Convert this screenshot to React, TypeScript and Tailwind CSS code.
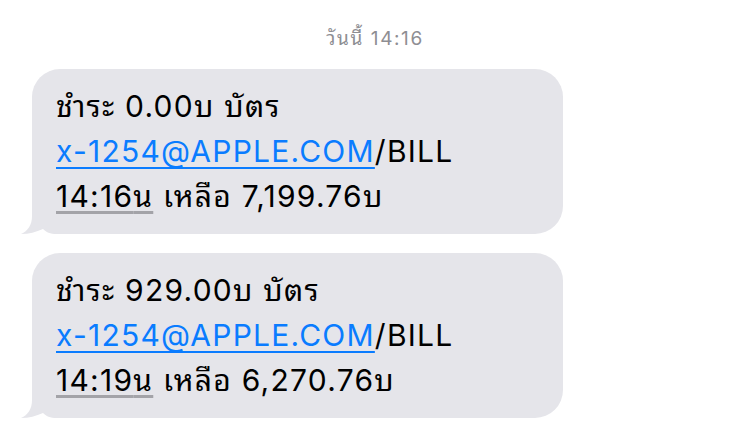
import React from "react";

function Tail() {
  return (
    <svg
      className="absolute bottom-0 left-[-11px]"
      width="50"
      height="30"
      viewBox="0 0 50 30"
    >
      <path
        d="M11 0 L11 12 C11 21 7 27 0 30 C8 30 15 28 22 25 C25 28 29 30 36 30 L50 30 L50 0 Z"
        fill="#e5e5ea"
      />
    </svg>
  );
}

function Bubble({ amount, time, balance }: { amount: string; time: string; balance: string }) {
  return (
    <div className="relative ml-[32px] h-[165px] w-[531px] rounded-[28px] bg-[#e5e5ea]">
      <Tail />
      <div className="relative pl-[24px] pt-[15px] font-['Inter','Noto_Sans_Thai_Looped',sans-serif] text-[30px] leading-[45px] tracking-[1.25px] text-black">
        <div>ชำระ {amount}บ บัตร</div>
        <div>
          <span className="text-[#0a7cff] underline decoration-[1.5px] underline-offset-[5px] [text-decoration-skip-ink:none]">
            x-1254@APPLE.COM
          </span>
          /BILL
        </div>
        <div>
          <span className="underline decoration-[#a3a3a8] decoration-[3px] underline-offset-[4px] [text-decoration-skip-ink:none]">
            {time}น
          </span>{" "}
          เหลือ {balance}บ
        </div>
      </div>
    </div>
  );
}

export default function App() {
  return (
    <div className="h-[432px] w-[750px] overflow-hidden bg-white">
      <div className="pt-[27px] text-center font-['Inter','Noto_Sans_Thai_Looped',sans-serif] text-[19px] leading-[24px] tracking-[1.6px] text-[#8e8e93]">
        วันนี้ 14:16
      </div>
      <div className="mt-[18px] flex flex-col gap-[19px]">
        <Bubble amount="0.00" time="14:16" balance="7,199.76" />
        <Bubble amount="929.00" time="14:19" balance="6,270.76" />
      </div>
    </div>
  );
}
